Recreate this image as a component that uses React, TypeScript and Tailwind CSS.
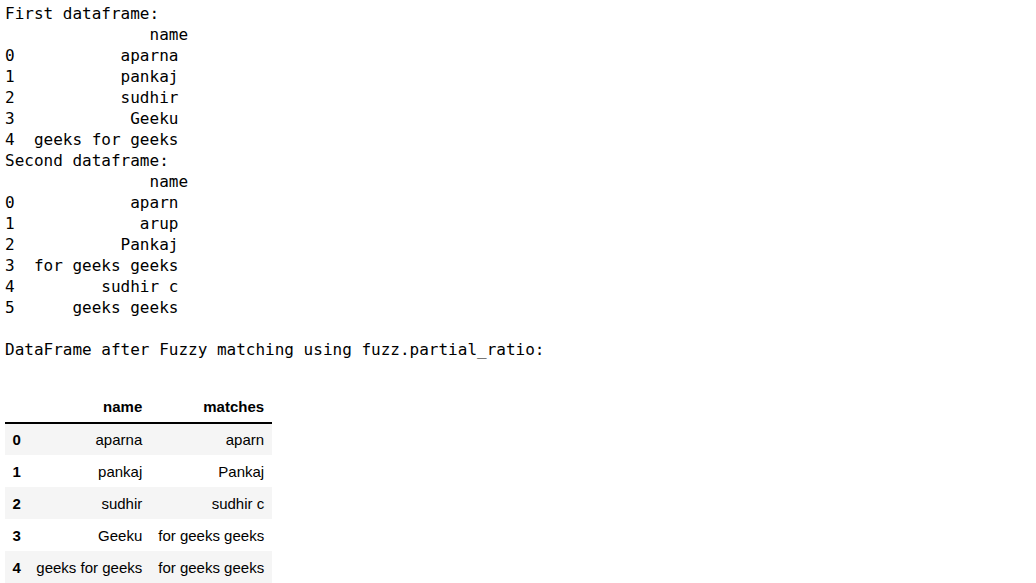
import React from 'react';

const first = ['aparna', 'pankaj', 'sudhir', 'Geeku', 'geeks for geeks'];
const second = ['aparn', 'arup', 'Pankaj', 'for geeks geeks', 'sudhir c', 'geeks geeks'];

const frameLines = (values: string[]) => [
  '               name',
  ...values.map((v, i) => `${i}  ${v.padStart(15, ' ')}`),
];

const rows = [
  ['aparna', 'aparn'],
  ['pankaj', 'Pankaj'],
  ['sudhir', 'sudhir c'],
  ['Geeku', 'for geeks geeks'],
  ['geeks for geeks', 'for geeks geeks'],
];

export default function App() {
  const lines = [
    'First dataframe:',
    ...frameLines(first),
    'Second dataframe:',
    ...frameLines(second),
    '',
    'DataFrame after Fuzzy matching using fuzz.partial_ratio:',
  ];

  return (
    <div className="w-[1036px] h-[583px] overflow-hidden bg-white text-black">
      <pre className="pt-[3px] pl-[5px] font-['DejaVu_Sans_Mono',monospace] text-[16px] leading-[21px] whitespace-pre">
        {lines.join('\n')}
      </pre>

      <table className="mt-[30px] ml-[5px] border-collapse font-['Liberation_Sans',Arial,sans-serif] text-[15px] leading-none">
        <thead>
          <tr className="h-[33px] border-b-2 border-black">
            <th className="px-[7.5px]"></th>
            <th className="px-[8px] text-right font-bold">name</th>
            <th className="px-[8px] text-right font-bold">matches</th>
          </tr>
        </thead>
        <tbody>
          {rows.map(([name, match], i) => (
            <tr key={i} className={`h-[32px] ${i % 2 === 0 ? 'bg-[#f5f5f5]' : 'bg-white'}`}>
              <th className="px-[7.5px] text-left font-bold">{i}</th>
              <td className="px-[8px] text-right">{name}</td>
              <td className="px-[8px] text-right">{match}</td>
            </tr>
          ))}
        </tbody>
      </table>
    </div>
  );
}
